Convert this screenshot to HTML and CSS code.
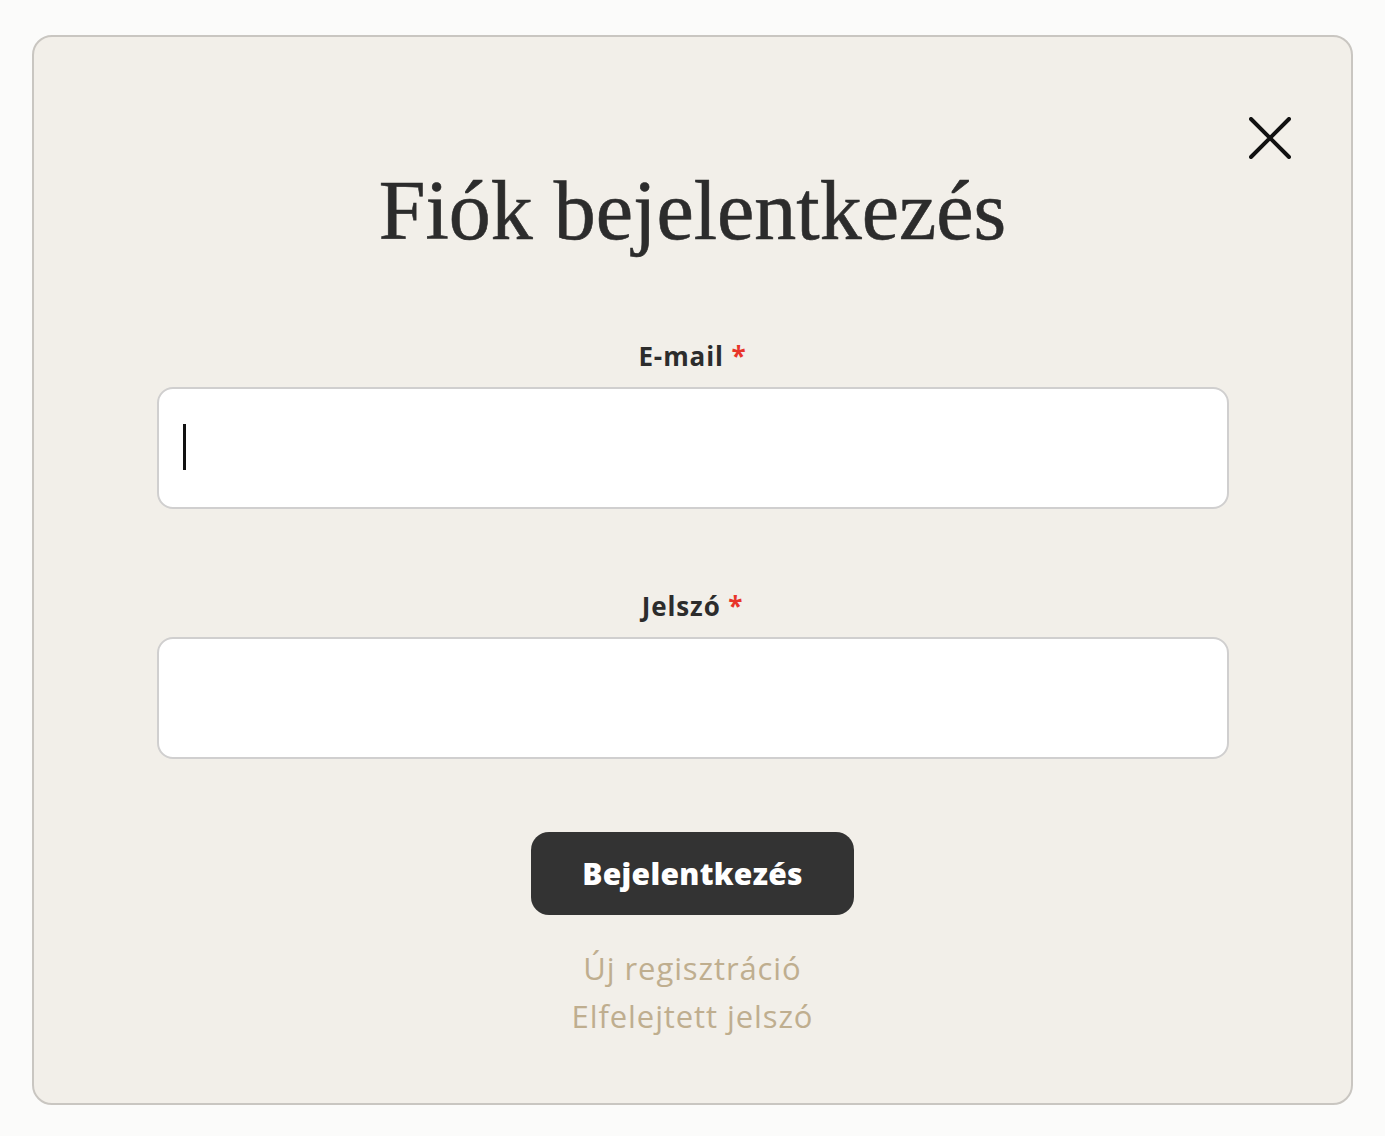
FILE: index.html
```html
<!DOCTYPE html>
<html lang="hu">
<head>
<meta charset="utf-8">
<title>Fiók bejelentkezés</title>
<link rel="stylesheet" href="styles.css">
</head>
<body>
<div class="modal">
  <button class="close" aria-label="Bezárás">
    <svg viewBox="0 0 42 42" width="42" height="42"><path d="M2 2 L40 40 M40 2 L2 40" stroke="#111" stroke-width="4" stroke-linecap="round" fill="none"/></svg>
  </button>
  <h1 class="title">Fiók bejelentkezés</h1>
  <form class="form">
    <div class="field">
      <label class="label">E-mail <span class="req">*</span></label>
      <div class="input-wrap">
        <input class="input" type="text">
        <span class="caret"></span>
      </div>
    </div>
    <div class="field">
      <label class="label">Jelszó <span class="req">*</span></label>
      <div class="input-wrap">
        <input class="input" type="password">
      </div>
    </div>
    <button class="submit" type="button">Bejelentkezés</button>
    <div class="links">
      <a class="link">Új regisztráció</a>
      <a class="link">Elfelejtett jelszó</a>
    </div>
  </form>
</div>
</body>
</html>
```
FILE: styles.css
```css
* { box-sizing: border-box; }
html, body { margin: 0; }
body {
  background: #fbfbfa;
  padding: 35px 32px 31px 32px;
  font-family: "Open Sans", "Liberation Sans", sans-serif;
}
.modal {
  position: relative;
  width: 1321px;
  height: 1070px;
  background: #f2efe9;
  border: 2px solid #c9c6c1;
  border-radius: 20px;
  display: flex;
  flex-direction: column;
  align-items: center;
}
.close {
  position: absolute;
  top: 80px;
  right: 60px;
  width: 42px;
  height: 42px;
  padding: 0;
  border: 0;
  background: transparent;
}
.close svg { display: block; }
.title {
  margin: 126px 0 0 0;
  font-family: "Liberation Serif", serif;
  font-weight: 400;
  font-size: 84px;
  line-height: 96px;
  color: #2c2c2c;
  -webkit-text-stroke: 0.6px #2c2c2c;
}
.form {
  width: 1072px;
  display: flex;
  flex-direction: column;
  align-items: center;
  margin-top: 80px;
}
.field {
  width: 100%;
  display: flex;
  flex-direction: column;
  align-items: center;
  margin-bottom: 80px;
}
.field + .field { margin-bottom: 73px; }
.label {
  font-size: 26px;
  font-weight: 700;
  letter-spacing: 0.9px;
  color: #2c2c2c;
  line-height: 34px;
  margin-bottom: 14px;
}
.req { color: #e8352a; }
.input-wrap {
  position: relative;
  width: 100%;
}
.input {
  display: block;
  width: 100%;
  height: 122px;
  background: #fff;
  border: 2px solid #d0cfcf;
  border-radius: 16px;
  outline: none;
}
.caret {
  position: absolute;
  left: 26px;
  top: 37px;
  width: 3px;
  height: 46px;
  background: #111;
}
.submit {
  width: 323px;
  height: 83px;
  background: #333;
  color: #fff;
  border: 0;
  border-radius: 18px;
  font-family: "Open Sans", "Liberation Sans", sans-serif;
  font-weight: 800;
  font-size: 30px;
  letter-spacing: 0.3px;
}
.links {
  margin-top: 29px;
  display: flex;
  flex-direction: column;
  align-items: center;
}
.link {
  color: #bfae8f;
  font-size: 31px;
  letter-spacing: 0.9px;
  line-height: 48px;
}
```
